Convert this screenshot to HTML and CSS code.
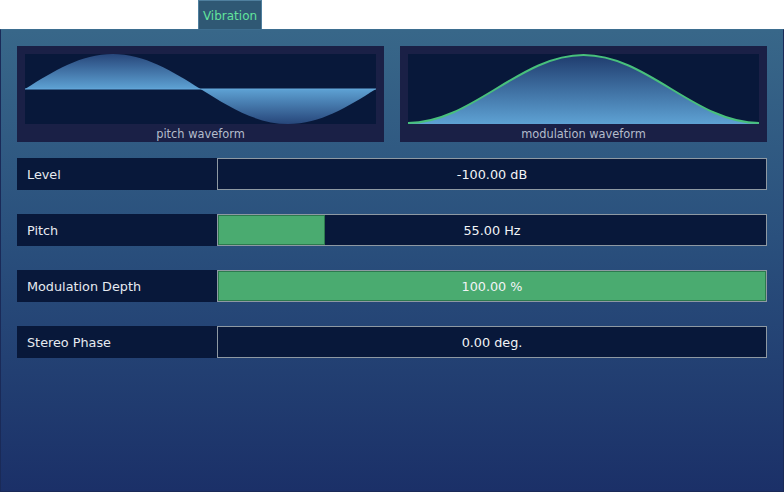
FILE: index.html
```html
<!DOCTYPE html>
<html>
<head>
<meta charset="utf-8">
<link rel="stylesheet" href="styles.css">
</head>
<body>
<div class="tabs"><div class="tab">Vibration</div></div>
<div class="panel">
  <div class="waves">
    <div class="wave">
      <svg class="graph" width="351" height="70" viewBox="0 0 351 70">
        <defs>
          <linearGradient id="gTop" gradientUnits="userSpaceOnUse" x1="0" y1="0" x2="0" y2="35">
            <stop offset="0" stop-color="#27467a"/>
            <stop offset="1" stop-color="#5ea2d4"/>
          </linearGradient>
          <linearGradient id="gBot" gradientUnits="userSpaceOnUse" x1="0" y1="35" x2="0" y2="70">
            <stop offset="0" stop-color="#5ea2d4"/>
            <stop offset="1" stop-color="#27467a"/>
          </linearGradient>
        </defs>
        <path d="M0,35 C28.6,17.07 56,0 87.75,0 C119.5,0 146.9,17.07 175.5,35 Z" fill="url(#gTop)"/>
        <path d="M175.5,35 C204.1,52.93 231.5,70 263.25,70 C295,70 322.4,52.93 351,35 Z" fill="url(#gBot)"/>
        <rect x="0" y="34.5" width="351" height="1" fill="#64a8dc"/>
      </svg>
      <div class="wave-label">pitch waveform</div>
    </div>
    <div class="wave">
      <svg class="graph" width="351" height="70" viewBox="0 0 351 70">
        <defs>
          <linearGradient id="gMod" gradientUnits="userSpaceOnUse" x1="0" y1="0" x2="0" y2="70">
            <stop offset="0" stop-color="#1e3a6c"/>
            <stop offset="1" stop-color="#5ea2d4"/>
          </linearGradient>
        </defs>
        <path d="M0,69 C31.76,69 59.13,52.42 87.75,35 C116.37,17.58 143.75,1 175.5,1 C207.25,1 234.63,17.58 263.25,35 C291.87,52.42 319.24,69 351,69 L351,70 L0,70 Z" fill="url(#gMod)"/>
        <path d="M0,69 C31.76,69 59.13,52.42 87.75,35 C116.37,17.58 143.75,1 175.5,1 C207.25,1 234.63,17.58 263.25,35 C291.87,52.42 319.24,69 351,69" fill="none" stroke="#48c07c" stroke-width="2"/>
      </svg>
      <div class="wave-label">modulation waveform</div>
    </div>
  </div>
  <div class="rows">
    <div class="row">
      <div class="label">Level</div>
      <div class="value"><div class="fill" style="width:0%"></div><span class="num">-100.00 dB</span></div>
    </div>
    <div class="row">
      <div class="label">Pitch</div>
      <div class="value"><div class="fill" style="width:19.5%"></div><span class="num">55.00 Hz</span></div>
    </div>
    <div class="row">
      <div class="label">Modulation Depth</div>
      <div class="value"><div class="fill" style="width:100%"></div><span class="num">100.00 %</span></div>
    </div>
    <div class="row">
      <div class="label">Stereo Phase</div>
      <div class="value"><div class="fill" style="width:0%"></div><span class="num">0.00 deg.</span></div>
    </div>
  </div>
</div>
</body>
</html>
```
FILE: styles.css
```css
html, body {
  margin: 0;
  padding: 0;
  background: #ffffff;
  font-family: "DejaVu Sans", Verdana, sans-serif;
  font-size: 12px;
}
.tabs {
  height: 29px;
  display: flex;
  padding-left: 198px;
}
.tab {
  width: 64px;
  height: 29px;
  box-sizing: border-box;
  background: #2f5874;
  border: 1px solid #4f7f9e;
  border-bottom: none;
  color: #62e39c;
  display: flex;
  align-items: center;
  justify-content: center;
  padding-top: 2px;
}
.panel {
  height: 463px;
  box-sizing: border-box;
  background: linear-gradient(#386789, #2a507d 45%, #1b3068);
  border: 1px solid #1a2a58;
  border-top: 1px solid #3d6e90;
  padding: 16px 16px 0 16px;
}
.waves {
  display: flex;
  gap: 16px;
}
.wave {
  width: 367px;
  height: 96px;
  box-sizing: border-box;
  background: #1a2046;
  padding: 8px 8px 0 8px;
  display: flex;
  flex-direction: column;
}
.graph {
  display: block;
  background: #08183a;
}
.wave-label {
  height: 18px;
  line-height: 18px;
  padding-top: 1px;
  box-sizing: border-box;
  text-align: center;
  font-size: 11.4px;
  color: #b4bccb;
}
.rows {
  margin-top: 16px;
  display: flex;
  flex-direction: column;
  gap: 24px;
}
.row {
  display: flex;
  height: 32px;
  font-size: 12.8px;
}
.label {
  width: 200px;
  background: #08183a;
  color: #e6eaf0;
  padding-left: 10px;
  padding-top: 1px;
  box-sizing: border-box;
  display: flex;
  align-items: center;
}
.value {
  position: relative;
  width: 550px;
  box-sizing: border-box;
  border: 1px solid #8e99a3;
  background: #08183a;
  padding-top: 1px;
  display: flex;
  align-items: center;
  justify-content: center;
}
.fill {
  position: absolute;
  left: 0;
  top: 0;
  bottom: 0;
  box-sizing: border-box;
  background: #4aab70;
  border: 1px solid #2c7a4e;
}
.fill[style="width:0%"] {
  border: none;
}
.num {
  position: relative;
  color: #f2f4f6;
}
```
